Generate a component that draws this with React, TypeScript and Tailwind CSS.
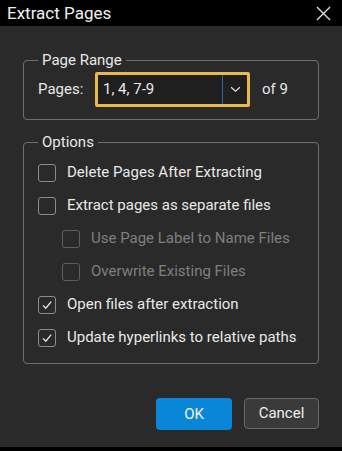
import React from 'react';

function Box({ checked, disabled }: { checked?: boolean; disabled?: boolean }) {
  return (
    <span
      className={`flex h-[18px] w-[18px] shrink-0 items-center justify-center rounded-[3px] border ${
        disabled ? 'border-[#5e5e5e]' : 'border-[#8c8c8c]'
      }`}
    >
      {checked && (
        <svg viewBox="0 0 12 12" className="h-[12px] w-[12px]" fill="none" stroke="#e6e6e6" strokeWidth="1.3">
          <path d="M2 6.4 L4.8 9.2 L10.2 2.6" />
        </svg>
      )}
    </span>
  );
}

function Row({ label, checked, disabled, indent }: { label: string; checked?: boolean; disabled?: boolean; indent?: boolean }) {
  return (
    <label className={`flex h-[33px] items-center gap-[11px] ${indent ? 'pl-[24px]' : ''}`}>
      <Box checked={checked} disabled={disabled} />
      <span className={disabled ? 'text-[#7f7f7f]' : 'text-[#e8e8e8]'}>{label}</span>
    </label>
  );
}

export default function App() {
  return (
    <div className="flex h-[451px] w-[342px] flex-col bg-[#2a2a2a] font-['Roboto',sans-serif] text-[15px] text-[#e8e8e8]">
      <header className="flex h-[26px] items-center justify-between bg-black pl-[7px] pr-[11px]">
        <h1 className="text-[17px] leading-none text-[#f0f0f0]">Extract Pages</h1>
        <svg viewBox="0 0 16 16" className="h-[15px] w-[15px]" stroke="#e0e0e0" strokeWidth="1.4">
          <path d="M1 1 L15 15 M15 1 L1 15" />
        </svg>
      </header>

      <div className="flex flex-1 flex-col px-[23px] pt-[24px]">
        <fieldset className="h-[70px] rounded-[4px] border border-[#6e6e6e] px-[14px]">
          <legend className="px-[4px] leading-[20px]">Page Range</legend>
          <div className="mt-[2px] flex items-center">
            <span className="w-[57px]">Pages:</span>
            <div className="flex h-[35px] w-[155px] items-center rounded-[2px] border-[3px] border-[#e9b949] bg-[#1f1f1f]">
              <span className="flex-1 pl-[5px]">1, 4, 7-9</span>
              <span className="h-full w-px bg-[#2c6aa0]" />
              <span className="flex w-[24px] justify-center">
                <svg viewBox="0 0 12 8" className="h-[7px] w-[11px]" fill="none" stroke="#e6e6e6" strokeWidth="1.4">
                  <path d="M1 1.5 L6 6 L11 1.5" />
                </svg>
              </span>
            </div>
            <span className="ml-[12px]">of 9</span>
          </div>
        </fieldset>

        <fieldset className="mt-[12px] h-[232px] rounded-[4px] border border-[#6e6e6e] px-[14px]">
          <legend className="px-[4px] leading-[20px]">Options</legend>
          <div className="mt-[4px] flex flex-col">
            <Row label="Delete Pages After Extracting" />
            <Row label="Extract pages as separate files" />
            <Row label="Use Page Label to Name Files" disabled indent />
            <Row label="Overwrite Existing Files" disabled indent />
            <Row label="Open files after extraction" checked />
            <Row label="Update hyperlinks to relative paths" checked />
          </div>
        </fieldset>

        <div className="mt-[34px] flex justify-end gap-[12px]">
          <button className="h-[32px] w-[76px] rounded-[4px] bg-[#0a86d9] text-[#f4f4f4]">OK</button>
          <button className="h-[31px] w-[75px] rounded-[4px] border border-[#6a6a6a] bg-[#3a3a3a] text-[#eeeeee]">Cancel</button>
        </div>
      </div>
      <div className="h-[4px] bg-black" />
    </div>
  );
}
